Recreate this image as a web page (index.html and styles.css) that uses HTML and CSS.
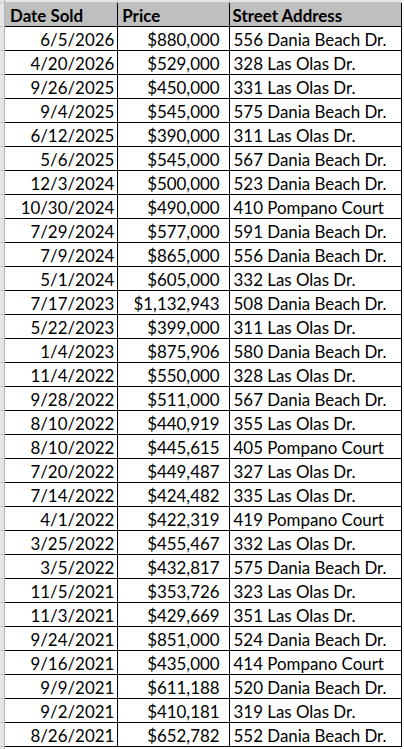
FILE: index.html
```html
<!DOCTYPE html>
<html>
<head>
<meta charset="utf-8">
<link rel="stylesheet" href="styles.css">
</head>
<body>
<div class="sheet">
<table class="grid">
<colgroup><col class="c-rh"><col class="c-date"><col class="c-price"><col class="c-addr"></colgroup>
<thead>
<tr class="colheads"><td class="rh"></td><td></td><td></td><td></td></tr>
<tr class="head"><td class="rh"></td><th class="date">Date Sold</th><th class="price">Price</th><th class="addr">Street Address</th></tr>
</thead>
<tbody>
<tr><td class="rh"></td><td class="date">6/5/2026</td><td class="price">$880,000</td><td class="addr">556 Dania Beach Dr.</td></tr>
<tr><td class="rh"></td><td class="date">4/20/2026</td><td class="price">$529,000</td><td class="addr">328 Las Olas Dr.</td></tr>
<tr><td class="rh"></td><td class="date">9/26/2025</td><td class="price">$450,000</td><td class="addr">331 Las Olas Dr.</td></tr>
<tr><td class="rh"></td><td class="date">9/4/2025</td><td class="price">$545,000</td><td class="addr">575 Dania Beach Dr.</td></tr>
<tr><td class="rh"></td><td class="date">6/12/2025</td><td class="price">$390,000</td><td class="addr">311 Las Olas Dr.</td></tr>
<tr><td class="rh"></td><td class="date">5/6/2025</td><td class="price">$545,000</td><td class="addr">567 Dania Beach Dr.</td></tr>
<tr><td class="rh"></td><td class="date">12/3/2024</td><td class="price">$500,000</td><td class="addr">523 Dania Beach Dr.</td></tr>
<tr><td class="rh"></td><td class="date">10/30/2024</td><td class="price">$490,000</td><td class="addr">410 Pompano Court</td></tr>
<tr><td class="rh"></td><td class="date">7/29/2024</td><td class="price">$577,000</td><td class="addr">591 Dania Beach Dr.</td></tr>
<tr><td class="rh"></td><td class="date">7/9/2024</td><td class="price">$865,000</td><td class="addr">556 Dania Beach Dr.</td></tr>
<tr><td class="rh"></td><td class="date">5/1/2024</td><td class="price">$605,000</td><td class="addr">332 Las Olas Dr.</td></tr>
<tr><td class="rh"></td><td class="date">7/17/2023</td><td class="price">$1,132,943</td><td class="addr">508 Dania Beach Dr.</td></tr>
<tr><td class="rh"></td><td class="date">5/22/2023</td><td class="price">$399,000</td><td class="addr">311 Las Olas Dr.</td></tr>
<tr><td class="rh"></td><td class="date">1/4/2023</td><td class="price">$875,906</td><td class="addr">580 Dania Beach Dr.</td></tr>
<tr><td class="rh"></td><td class="date">11/4/2022</td><td class="price">$550,000</td><td class="addr">328 Las Olas Dr.</td></tr>
<tr><td class="rh"></td><td class="date">9/28/2022</td><td class="price">$511,000</td><td class="addr">567 Dania Beach Dr.</td></tr>
<tr><td class="rh"></td><td class="date">8/10/2022</td><td class="price">$440,919</td><td class="addr">355 Las Olas Dr.</td></tr>
<tr><td class="rh"></td><td class="date">8/10/2022</td><td class="price">$445,615</td><td class="addr">405 Pompano Court</td></tr>
<tr><td class="rh"></td><td class="date">7/20/2022</td><td class="price">$449,487</td><td class="addr">327 Las Olas Dr.</td></tr>
<tr><td class="rh"></td><td class="date">7/14/2022</td><td class="price">$424,482</td><td class="addr">335 Las Olas Dr.</td></tr>
<tr><td class="rh"></td><td class="date">4/1/2022</td><td class="price">$422,319</td><td class="addr">419 Pompano Court</td></tr>
<tr><td class="rh"></td><td class="date">3/25/2022</td><td class="price">$455,467</td><td class="addr">332 Las Olas Dr.</td></tr>
<tr><td class="rh"></td><td class="date">3/5/2022</td><td class="price">$432,817</td><td class="addr">575 Dania Beach Dr.</td></tr>
<tr><td class="rh"></td><td class="date">11/5/2021</td><td class="price">$353,726</td><td class="addr">323 Las Olas Dr.</td></tr>
<tr><td class="rh"></td><td class="date">11/3/2021</td><td class="price">$429,669</td><td class="addr">351 Las Olas Dr.</td></tr>
<tr><td class="rh"></td><td class="date">9/24/2021</td><td class="price">$851,000</td><td class="addr">524 Dania Beach Dr.</td></tr>
<tr><td class="rh"></td><td class="date">9/16/2021</td><td class="price">$435,000</td><td class="addr">414 Pompano Court</td></tr>
<tr><td class="rh"></td><td class="date">9/9/2021</td><td class="price">$611,188</td><td class="addr">520 Dania Beach Dr.</td></tr>
<tr><td class="rh"></td><td class="date">9/2/2021</td><td class="price">$410,181</td><td class="addr">319 Las Olas Dr.</td></tr>
<tr><td class="rh"></td><td class="date">8/26/2021</td><td class="price">$652,782</td><td class="addr">552 Dania Beach Dr.</td></tr>
<tr class="tail"><td class="rh"></td><td></td><td></td><td></td></tr>
</tbody>
</table>
</div>
</body>
</html>
```

FILE: styles.css
```css
html, body {
  margin: 0;
  padding: 0;
  background: #ffffff;
}

.sheet {
  width: 404px;
  height: 749px;
  overflow: hidden;
}

.grid {
  border-collapse: separate;
  border-spacing: 0;
  table-layout: fixed;
  width: 402px;
  font-family: Lato, "Liberation Sans", sans-serif;
  font-size: 16.9px;
  color: #000000;
}

.c-rh { width: 5px; }
.c-date { width: 113px; }
.c-price { width: 111px; }
.c-addr { width: 172px; }

.grid td, .grid th {
  padding: 0;
  height: 23px;
  line-height: 20px;
  vertical-align: bottom;
  white-space: nowrap;
  overflow: hidden;
  border-right: 1px solid #000000;
  border-bottom: 1px solid #000000;
  font-weight: normal;
}

.grid .rh {
  background: #e6e6e6;
  border-right: 1px solid #b4b4b4;
  border-bottom: 1px solid #c8c8c8;
}

.colheads td {
  height: 2px;
  line-height: 2px;
  background: #e6e6e6;
  border-right: 1px solid #c8c8c8;
  border-bottom: 1px solid #c3c3c3;
}

.colheads td:last-child {
  border-right: none;
}

.head th {
  height: 21px;
  background: #bfbfbf;
  font-weight: bold;
  text-align: left;
}

.head th.date { padding-left: 5px; }
.head th.price { padding-left: 4px; }
.head th.addr { padding-left: 3px; }

td.date {
  text-align: right;
  padding-right: 3px;
}

td.price {
  text-align: right;
  padding-right: 9px;
}

td.addr {
  text-align: left;
  padding-left: 4px;
}

.tail td {
  height: 6px;
  border: none;
}

.tail td.rh {
  border-bottom: none;
}
```
